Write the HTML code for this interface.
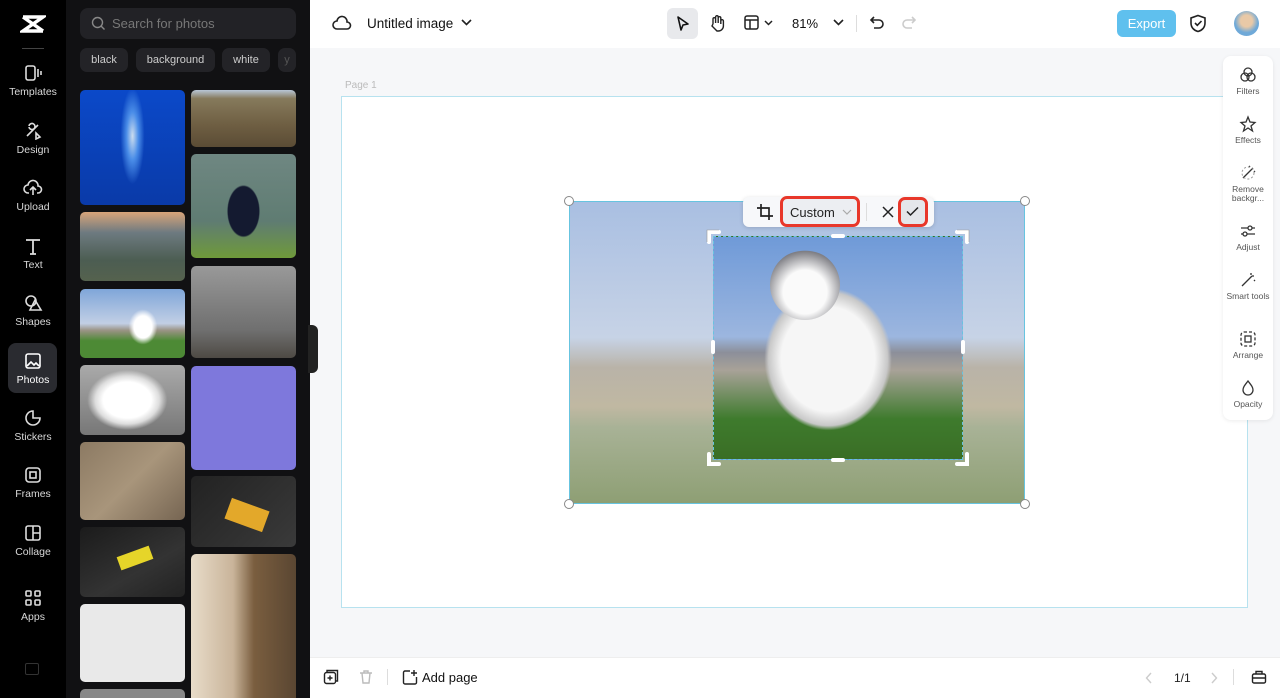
<!DOCTYPE html><html style="width:1280px;height:698px;overflow:hidden"><head><style>
*{box-sizing:border-box;margin:0;padding:0}
body{width:1280px;height:698px;overflow:hidden;font-family:"Liberation Sans",sans-serif;background:#f6f7f9;position:relative}
.abs{position:absolute}
.rail{left:0;top:0;width:66px;height:698px;background:#000}
.ri{position:absolute;left:0;width:66px;text-align:center;color:#d8d8d8;font-size:10.5px}
.ri svg{display:block;margin:0 auto 4px}
.panel{left:66px;top:0;width:244px;height:698px;background:#111113;overflow:hidden}
.t{position:absolute;border-radius:5px}
.chip{position:absolute;top:48px;height:24px;border-radius:7px;background:#232327;color:#ccc;font-size:11px;line-height:24px;text-align:center}
.rp{position:absolute;left:0;width:50px;text-align:center;font-size:8.5px;color:#555;line-height:9px}
.rp svg{display:block;margin:0 auto 3px}
.h{position:absolute;width:10px;height:10px;border:1px solid #888;border-radius:50%;background:#fff}
</style></head><body>
<div class="abs rail">
<div class="ri" style="top:14px"><svg width="26" height="20" viewBox="0 0 26 20"><path d="M3 3h20L3 17h20M3 3l20 14" stroke="#fff" stroke-width="3.5" fill="none"/></svg></div>
<div class="abs" style="left:22px;top:48px;width:22px;height:1px;background:#444"></div>
<div class="ri" style="top:64px"><svg width="20" height="18"><rect x="3" y="2" width="9" height="14" rx="2" stroke="#ddd" stroke-width="1.6" fill="none"/><path d="M15 5v8M18 7v4" stroke="#ddd" stroke-width="1.6"/></svg>Templates</div>
<div class="ri" style="top:122px"><svg width="20" height="18"><path d="M4 14L15 3M6 4a3 3 0 1 1 0 1M13 11l4 4-4 2z" stroke="#ddd" stroke-width="1.6" fill="none"/></svg>Design</div>
<div class="ri" style="top:179px"><svg width="20" height="18"><path d="M6 14H5a4 4 0 0 1 0-8 5 5 0 0 1 10 1 3.5 3.5 0 0 1 0 7h-1M10 16V9M7 11l3-3 3 3" stroke="#ddd" stroke-width="1.6" fill="none"/></svg>Upload</div>
<div class="ri" style="top:237px"><svg width="20" height="18"><path d="M3 3h14M10 3v14M7 17h6" stroke="#ddd" stroke-width="1.8" fill="none"/></svg>Text</div>
<div class="ri" style="top:294px"><svg width="20" height="18"><circle cx="8" cy="7" r="5" stroke="#ddd" stroke-width="1.6" fill="none"/><path d="M12 6l6 10H7z" stroke="#ddd" stroke-width="1.6" fill="none"/></svg>Shapes</div>
<div class="abs" style="left:8px;top:343px;width:49px;height:50px;border-radius:8px;background:#2a2b30"></div>
<div class="ri" style="top:352px;color:#fff"><svg width="20" height="18"><rect x="3" y="2" width="14" height="14" rx="2" stroke="#fff" stroke-width="1.6" fill="none"/><path d="M4 14l4-4 3 3 2-2 3 3" stroke="#fff" stroke-width="1.6" fill="none"/></svg>Photos</div>
<div class="ri" style="top:409px"><svg width="20" height="18"><path d="M10 2a7 7 0 1 0 7 7h-7z" stroke="#ddd" stroke-width="1.6" fill="none"/></svg>Stickers</div>
<div class="ri" style="top:466px"><svg width="20" height="18"><rect x="3" y="2" width="14" height="14" rx="3" stroke="#ddd" stroke-width="1.6" fill="none"/><rect x="7" y="6" width="6" height="6" stroke="#ddd" stroke-width="1.6" fill="none"/></svg>Frames</div>
<div class="ri" style="top:524px"><svg width="20" height="18"><rect x="3" y="2" width="14" height="14" rx="2" stroke="#ddd" stroke-width="1.6" fill="none"/><path d="M10 2v14M10 9h7" stroke="#ddd" stroke-width="1.6"/></svg>Collage</div>
<div class="ri" style="top:589px"><svg width="20" height="18"><g stroke="#ddd" stroke-width="1.6" fill="none"><rect x="3" y="2" width="5" height="5" rx="1"/><rect x="12" y="2" width="5" height="5" rx="1"/><rect x="3" y="11" width="5" height="5" rx="1"/><rect x="12" y="11" width="5" height="5" rx="1"/></g></svg>Apps</div>
<div class="abs" style="left:25px;top:663px;width:14px;height:12px;border:1.5px solid #333;border-radius:2px"></div>
</div>
<div class="abs panel">
<div class="abs" style="left:14px;top:8px;width:216px;height:31px;border-radius:8px;background:#222226;color:#777;font-size:13px;line-height:31px;padding-left:32px">Search for photos
<svg class="abs" style="left:11px;top:8px" width="15" height="15"><circle cx="6.5" cy="6.5" r="5" stroke="#888" stroke-width="1.4" fill="none"/><path d="M10 10l3.5 3.5" stroke="#888" stroke-width="1.4"/></svg></div>
<div class="chip" style="left:14px;width:48px">black</div>
<div class="chip" style="left:70px;width:79px">background</div>
<div class="chip" style="left:156px;width:48px">white</div>
<div class="chip" style="left:212px;width:18px;color:#555">y</div>
<div class="t" style="left:14px;top:90px;width:105px;height:115px;background:radial-gradient(ellipse 15px 60px at 50% 40%,#cde 0,#4a8de8 40%,transparent 80%),linear-gradient(#0b49c9,#0a3aa8)"></div>
<div class="t" style="left:14px;top:212px;width:105px;height:69px;background:linear-gradient(#d8a47a,#6d7a80 30%,#4c5d52 70%,#55624e)"></div>
<div class="t" style="left:14px;top:289px;width:105px;height:69px;background:radial-gradient(ellipse 18px 22px at 60% 55%,#fff 50%,transparent 80%),linear-gradient(#7fa6d9,#c2cfe5 50%,#9a9384 60%,#4d8a35 75%)"></div>
<div class="t" style="left:14px;top:365px;width:105px;height:70px;background:radial-gradient(ellipse 40px 30px at 45% 50%,#fff 60%,#ddd 80%,transparent 100%),linear-gradient(#aaa,#777)"></div>
<div class="t" style="left:14px;top:442px;width:105px;height:78px;background:linear-gradient(135deg,#8c7a63,#a8957b,#766552)"></div>
<div class="t" style="left:14px;top:527px;width:105px;height:70px;background:linear-gradient(150deg,#1b1b1b,#333 60%,#222);"><div class="abs" style="left:38px;top:24px;width:34px;height:14px;background:#e6d529;transform:rotate(-20deg)"></div></div>
<div class="t" style="left:14px;top:604px;width:105px;height:78px;background:#e9e9e9"></div>
<div class="t" style="left:14px;top:689px;width:105px;height:20px;background:#888"></div>
<div class="t" style="left:125px;top:90px;width:105px;height:57px;background:linear-gradient(#b8c6d6 0,#867a5c 15%,#6f5f43 60%,#5b4c35)"></div>
<div class="t" style="left:125px;top:154px;width:105px;height:104px;background:radial-gradient(ellipse 22px 35px at 50% 55%,#141a30 70%,transparent 75%),linear-gradient(#6f8782,#5f7c72 65%,#6f9a3a)"></div>
<div class="t" style="left:125px;top:266px;width:105px;height:92px;background:linear-gradient(#999,#6f6f6f 70%,#4e4a44)"></div>
<div class="t" style="left:125px;top:366px;width:105px;height:104px;background:#7e78dc"></div>
<div class="t" style="left:125px;top:476px;width:105px;height:71px;background:linear-gradient(135deg,#222,#3a3a3a)"><div class="abs" style="left:36px;top:28px;width:40px;height:22px;background:#e3a82a;transform:rotate(20deg)"></div></div>
<div class="t" style="left:125px;top:554px;width:105px;height:150px;background:linear-gradient(90deg,#e8dcc9,#c9b49a 40%,#7a5e3f 60%,#5a4632)"></div>
</div>
<div class="abs" style="left:308px;top:325px;width:10px;height:48px;background:#222;border-radius:0 6px 6px 0"></div>
<div class="abs" style="left:310px;top:0;width:970px;height:48px;background:#fff"></div>
<svg class="abs" style="left:332px;top:15px" width="20" height="18"><path d="M6 14H5a4 4 0 0 1 0-8 5 5 0 0 1 10 1 3.5 3.5 0 0 1 0 7z" stroke="#222" stroke-width="1.6" fill="none"/></svg>
<div class="abs" style="left:367px;top:16px;font-size:13.5px;color:#111">Untitled image</div>
<svg class="abs" style="left:461px;top:19px" width="11" height="8"><path d="M1 1l4.5 4.5L10 1" stroke="#222" stroke-width="1.6" fill="none"/></svg>
<div class="abs" style="left:667px;top:8px;width:31px;height:31px;border-radius:6px;background:#e8e9ec"></div>
<svg class="abs" style="left:675px;top:15px" width="16" height="17"><path d="M3 2l10 7-5 1-2 5z" stroke="#111" stroke-width="1.6" fill="none" stroke-linejoin="round"/></svg>
<svg class="abs" style="left:708px;top:14px" width="18" height="18"><path d="M5 10V5a1.3 1.3 0 0 1 2.6 0v4V3a1.3 1.3 0 0 1 2.6 0v6V4a1.3 1.3 0 0 1 2.6 0v6V7a1.3 1.3 0 0 1 2.6 0v5a5 5 0 0 1-5 5H9l-5-5 1-2" stroke="#222" stroke-width="1.4" fill="none"/></svg>
<svg class="abs" style="left:744px;top:15px" width="30" height="16"><rect x="1" y="1" width="13" height="13" rx="2" stroke="#222" stroke-width="1.5" fill="none"/><path d="M1 5h13M6 5v9M21 6l3.5 3.5L28 6" stroke="#222" stroke-width="1.5" fill="none"/></svg>
<div class="abs" style="left:792px;top:16px;font-size:13px;color:#111">81%</div>
<svg class="abs" style="left:833px;top:19px" width="11" height="8"><path d="M1 1l4.5 4.5L10 1" stroke="#222" stroke-width="1.6" fill="none"/></svg>
<div class="abs" style="left:856px;top:15px;width:1px;height:17px;background:#ddd"></div>
<svg class="abs" style="left:868px;top:15px" width="16" height="16"><path d="M4 5h7a4 4 0 0 1 0 8H6M6 2L3 5l3 3" stroke="#222" stroke-width="1.6" fill="none"/></svg>
<svg class="abs" style="left:902px;top:15px" width="16" height="16"><path d="M12 5H5a4 4 0 0 0 0 8h5M10 2l3 3-3 3" stroke="#ccc" stroke-width="1.6" fill="none"/></svg>
<div class="abs" style="left:1117px;top:10px;width:59px;height:27px;border-radius:6px;background:#5fc0ee;color:#fff;font-size:13px;line-height:27px;text-align:center">Export</div>
<svg class="abs" style="left:1189px;top:14px" width="18" height="19"><path d="M9 1.5l7 2.5v5c0 4.5-3 7.5-7 8.5-4-1-7-4-7-8.5V4z" stroke="#222" stroke-width="1.6" fill="none"/><path d="M6 9l2.3 2.3L12.5 7" stroke="#222" stroke-width="1.6" fill="none"/></svg>
<div class="abs" style="left:1234px;top:11px;width:25px;height:25px;border-radius:50%;background:radial-gradient(circle at 50% 40%,#e9c9a7 30%,#6fa9d8 60%)"></div>
<div class="abs" style="left:345px;top:80px;font-size:10px;color:#bbb">Page 1</div>
<div class="abs" style="left:341px;top:96px;width:907px;height:512px;background:#fff;border:1.5px solid #b7e2ef"></div>
<div class="abs" style="left:569px;top:201px;width:456px;height:303px;border:1.5px solid #67c4e0;background:linear-gradient(#a9bfe2 0,#c7d3e6 45%,#b9b3a8 55%,#c0b8a2 68%,#a8b296 75%,#8e9f74 100%)"></div>
<div class="abs" style="left:713px;top:236px;width:250px;height:224px;border:1.5px dashed #67c4e0;background:radial-gradient(ellipse 85px 95px at 46% 55%,#f6f6f6 55%,#c8c8c8 70%,transparent 75%),linear-gradient(#6f9ad8 0,#9cb6df 45%,#8c8f9a 52%,#a8a298 60%,#3e7b2d 82%,#3a6e25)"></div>
<div class="abs" style="left:770px;top:250px;width:70px;height:70px;border-radius:50%;background:radial-gradient(circle at 50% 60%,#fafafa 40%,#7c7c82 75%,transparent 76%)"></div>
<div class="h" style="left:564px;top:196px"></div><div class="h" style="left:1020px;top:196px"></div>
<div class="h" style="left:564px;top:499px"></div><div class="h" style="left:1020px;top:499px"></div>
<svg class="abs" style="left:706px;top:229px" width="264" height="238"><g stroke="#fff" stroke-width="4" fill="none" stroke-linecap="round"><path d="M3 13V3h10M251 3h10v10M3 225v10h10M261 225v10h-10M127 7h10M127 231h10M7 113v10M257 113v10"/></g><g stroke="#999" stroke-width="0.6" fill="none"><path d="M1 13V1h12M251 1h12v12"/></g></svg>
<div class="abs" style="left:743px;top:197px;width:191px;height:30px;border-radius:6px;background:#f7f8fa;box-shadow:0 1px 4px rgba(0,0,0,.15)"></div>
<svg class="abs" style="left:756px;top:203px" width="18" height="18"><path d="M5 1v12h12M1 5h12v12" stroke="#222" stroke-width="1.7" fill="none"/></svg>
<div class="abs" style="left:780px;top:196px;width:80px;height:31px;border:3px solid #e8372a;border-radius:7px;background:#eceef2"></div>
<div class="abs" style="left:790px;top:205px;font-size:13px;color:#222">Custom</div>
<svg class="abs" style="left:842px;top:209px" width="10" height="7"><path d="M1 1l4 4 4-4" stroke="#aaa" stroke-width="1.2" fill="none"/></svg>
<div class="abs" style="left:866px;top:203px;width:1px;height:18px;background:#ddd"></div>
<svg class="abs" style="left:882px;top:206px" width="12" height="12"><path d="M1 1l10 10M11 1L1 11" stroke="#222" stroke-width="1.5"/></svg>
<div class="abs" style="left:898px;top:197px;width:30px;height:30px;border:3px solid #e8372a;border-radius:7px;background:#e4e6ea"></div>
<svg class="abs" style="left:906px;top:206px" width="13" height="11"><path d="M1 5.5l3.5 3.5L12 1.5" stroke="#222" stroke-width="1.5" fill="none"/></svg>
<div class="abs" style="left:1223px;top:56px;width:50px;height:364px;background:#fff;border-radius:8px;box-shadow:0 1px 4px rgba(0,0,0,.08)">
<div class="rp" style="top:10px"><svg width="18" height="18"><g stroke="#333" stroke-width="1.3" fill="none"><circle cx="9" cy="6" r="4"/><circle cx="6" cy="11" r="4"/><circle cx="12" cy="11" r="4"/></g></svg>Filters</div>
<div class="rp" style="top:59px"><svg width="18" height="18"><path d="M9 2l2 5 5 .5-4 3.5 1.5 5L9 13l-4.5 3 1.5-5-4-3.5 5-.5z" stroke="#333" stroke-width="1.3" fill="none"/></svg>Effects</div>
<div class="rp" style="top:108px"><svg width="18" height="18"><path d="M4 14L14 4M10 3l1-1M15 8l1-1" stroke="#333" stroke-width="1.3" fill="none"/><circle cx="9" cy="9" r="6" stroke="#999" stroke-dasharray="2 2" fill="none"/></svg>Remove backgr...</div>
<div class="rp" style="top:166px"><svg width="18" height="18"><path d="M2 6h14M2 12h14" stroke="#333" stroke-width="1.3"/><circle cx="11" cy="6" r="2" fill="#fff" stroke="#333" stroke-width="1.3"/><circle cx="6" cy="12" r="2" fill="#fff" stroke="#333" stroke-width="1.3"/></svg>Adjust</div>
<div class="rp" style="top:215px"><svg width="18" height="18"><path d="M3 15L13 5M12 2v2M15 5h-2M16 9l-1 1" stroke="#333" stroke-width="1.3" fill="none"/></svg>Smart tools</div>
<div class="rp" style="top:274px"><svg width="18" height="18"><rect x="2" y="2" width="14" height="14" rx="3" stroke="#333" stroke-width="1.3" stroke-dasharray="3 2" fill="none"/><rect x="6" y="6" width="6" height="6" stroke="#333" stroke-width="1.3" fill="none"/></svg>Arrange</div>
<div class="rp" style="top:323px"><svg width="18" height="18"><path d="M9 2c3 4 5 6 5 9a5 5 0 0 1-10 0c0-3 2-5 5-9z" stroke="#333" stroke-width="1.3" fill="none"/></svg>Opacity</div>
</div>
<div class="abs" style="left:310px;top:657px;width:970px;height:41px;background:#fff;border-top:1px solid #eee"></div>
<svg class="abs" style="left:323px;top:669px" width="16" height="16"><rect x="1.5" y="3.5" width="11" height="11" rx="2" stroke="#222" stroke-width="1.4" fill="none"/><path d="M4 3.5V1.5h10.5V12h-2M7 6.5v5M4.5 9h5" stroke="#222" stroke-width="1.4" fill="none"/></svg>
<svg class="abs" style="left:358px;top:669px" width="16" height="16"><path d="M2 4h12M6 4V2h4v2M4 4l1 10h6l1-10" stroke="#bbb" stroke-width="1.4" fill="none"/></svg>
<div class="abs" style="left:387px;top:669px;width:1px;height:16px;background:#ddd"></div>
<svg class="abs" style="left:402px;top:669px" width="16" height="16"><path d="M8 2H3a1.5 1.5 0 0 0-1.5 1.5v10A1.5 1.5 0 0 0 3 15h10a1.5 1.5 0 0 0 1.5-1.5V8M12 1v6M9 4h6" stroke="#222" stroke-width="1.4" fill="none"/></svg>
<div class="abs" style="left:422px;top:670px;font-size:13px;color:#111">Add page</div>
<svg class="abs" style="left:1145px;top:672px" width="8" height="12"><path d="M6 1L1.5 6 6 11" stroke="#ccc" stroke-width="1.4" fill="none"/></svg>
<div class="abs" style="left:1174px;top:671px;font-size:12px;color:#222">1/1</div>
<svg class="abs" style="left:1210px;top:672px" width="8" height="12"><path d="M2 1l4.5 5L2 11" stroke="#ccc" stroke-width="1.4" fill="none"/></svg>
<div class="abs" style="left:1233px;top:669px;width:1px;height:16px;background:#ddd"></div>
<svg class="abs" style="left:1251px;top:669px" width="16" height="16"><rect x="1.5" y="5" width="13" height="9" rx="1.5" stroke="#222" stroke-width="1.4" fill="none"/><path d="M5 5V2.5h6V5M1.5 9h13" stroke="#222" stroke-width="1.4" fill="none"/></svg>
</body></html>
